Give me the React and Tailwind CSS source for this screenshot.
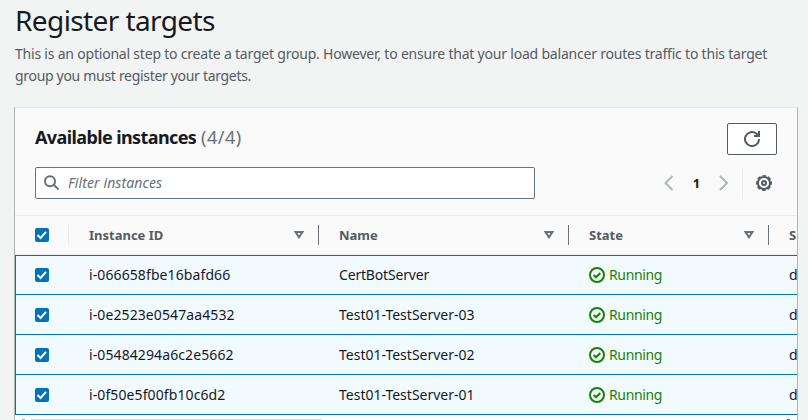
const instances = [
  { id: 'i-066658fbe16bafd66', name: 'CertBotServer' },
  { id: 'i-0e2523e0547aa4532', name: 'Test01-TestServer-03' },
  { id: 'i-05484294a6c2e5662', name: 'Test01-TestServer-02' },
  { id: 'i-0f50e5f00fb10c6d2', name: 'Test01-TestServer-01' },
];

function Checkbox() {
  return (
    <span className="flex h-[14px] w-[14px] shrink-0 rounded-[2px] bg-[#0073bb]">
      <svg width="14" height="14" viewBox="0 0 14 14" fill="none" stroke="#fff" strokeWidth="2">
        <path d="M2.5 7 L5.6 10 L11 3.8" />
      </svg>
    </span>
  );
}

function SortIcon() {
  return (
    <svg className="shrink-0" width="10" height="8" viewBox="0 0 10 8" fill="none" stroke="#687078" strokeWidth="2">
      <path d="M1.6 1 H8.4 L5 6.2 Z" />
    </svg>
  );
}

function StatusIcon() {
  return (
    <svg width="16" height="16" viewBox="0 0 16 16" fill="none" stroke="#1d8102" strokeWidth="2">
      <circle cx="8" cy="8" r="7" />
      <path d="M4.6 8 L7 10.3 L11.3 6" />
    </svg>
  );
}

function HeaderCell({ children }) {
  return (
    <div className="flex h-5 w-[250px] shrink-0 items-center border-r border-[#687078] pl-5 pr-[14px] [&:nth-child(4)]:w-[200px]">
      <span className="flex-1">{children}</span>
      <SortIcon />
    </div>
  );
}

function Row({ item, first }) {
  return (
    <div
      className={
        'flex h-10 items-center border-b border-l border-[#0073bb] bg-[#f1faff] pl-[19px] ' +
        (first ? 'border-t' : '')
      }
    >
      <Checkbox />
      <span className="ml-10 w-[250px] shrink-0 tracking-[0.1px]">{item.id}</span>
      <span className={'w-[250px] shrink-0 ' + (first ? 'tracking-[-0.18px]' : 'tracking-[0px]')}>{item.name}</span>
      <span className="flex w-[200px] shrink-0 items-center gap-1 text-[#1d8102]">
        <StatusIcon />
        <span className="tracking-[-0.35px]">Running</span>
      </span>
      <span className="shrink-0">d</span>
    </div>
  );
}

export default function App() {
  return (
    <div className="h-[420px] w-[808px] overflow-hidden bg-[#f2f3f3] font-['Noto_Sans',sans-serif] text-[14px] leading-[22px] text-[#16191f]">
      <header className="h-[107px] pl-[15px] pt-px">
        <h1 className="text-[28px] leading-[38px] tracking-[-0.6px]">Register targets</h1>
        <p className="mt-[4px] whitespace-nowrap text-[#545b64]">
          <span className="tracking-[-0.206px]">
            This is an optional step to create a target group. However, to ensure that your load balancer routes traffic to this target
          </span>
          <br />
          <span className="tracking-[-0.31px]">group you must register your targets.</span>
        </p>
      </header>

      <main className="ml-[14px] h-[313px] w-[784px] overflow-hidden border-x border-t border-x-[#aab7b8] border-t-[#e3e7e7] bg-white">
        <section className="h-[108px] border-b border-[#eaeded] bg-[#fafafa] pl-5 pr-5 pt-[15px]">
          <div className="flex items-start justify-between">
            <h2 className="mt-[2px] text-[18px] font-bold leading-[24px]">
              <span className="tracking-[-0.6px]">Available instances</span>{' '}
              <span className="font-normal tracking-[0.5px] text-[#687078]">(4/4)</span>
            </h2>
            <button className="flex h-8 w-[50px] items-center justify-center rounded-[2px] border border-[#545b64] bg-white">
              <svg width="16" height="16" viewBox="0 0 16 16" fill="none" stroke="#545b64" strokeWidth="2">
                <path d="M15 8 A7 7 0 1 1 12.5 2.7 L14.5 4.5" />
                <path d="M10 5 H15 V0" />
              </svg>
            </button>
          </div>
          <div className="mt-3 flex h-8 items-center">
            <div className="flex h-8 w-[500px] shrink-0 items-center rounded-[2px] border border-[#687078] bg-white pl-2">
              <svg width="16" height="16" viewBox="0 0 16 16" fill="none" stroke="#687078" strokeWidth="2">
                <circle cx="6" cy="6.3" r="5" />
                <path d="M9.8 9.8 L14.6 14.6" />
              </svg>
              <span className="ml-2 italic tracking-[0.1px] text-[#687078]">Filter instances</span>
            </div>
            <div className="ml-auto flex items-center">
              <svg width="10" height="16" viewBox="0 0 10 16" fill="none" stroke="#aab7b8" strokeWidth="2">
                <path d="M8.5 1 L1.5 8 L8.5 15" />
              </svg>
              <span className="w-[45px] text-center text-[13px] font-bold">1</span>
              <svg width="10" height="16" viewBox="0 0 10 16" fill="none" stroke="#aab7b8" strokeWidth="2">
                <path d="M1 1 L8 8 L1 15" />
              </svg>
              <span className="ml-[13px] h-8 w-px bg-[#eaeded]" />
              <svg className="ml-[13px] mr-[5px]" width="16" height="16" viewBox="0 0 16 16" fill="none" stroke="#545b64">
                <circle cx="8" cy="8" r="6.1" strokeWidth="2" />
                <circle cx="8" cy="8" r="7.2" strokeWidth="1.6" strokeDasharray="3.6 2.055" strokeDashoffset="1.8" />
                <circle cx="8" cy="8" r="2" strokeWidth="2" />
              </svg>
            </div>
          </div>
        </section>

        <section>
          <div className="flex h-[39px] items-center border-b border-[#eaeded] bg-[#fafafa] pl-5 text-[13px] font-bold text-[#545b64]">
            <div className="flex h-5 w-[34px] shrink-0 items-center border-r border-[#eaeded]">
              <Checkbox />
            </div>
            <HeaderCell>Instance ID</HeaderCell>
            <HeaderCell>Name</HeaderCell>
            <HeaderCell>State</HeaderCell>
            <span className="ml-5 shrink-0">S</span>
          </div>
          {instances.map((item, i) => (
            <Row key={item.id} item={item} first={i === 0} />
          ))}
          <div className="flex h-[5px] items-end bg-white pl-[7px] pr-[7px]">
            <span className="h-px w-[3px] bg-[#a3a3a3]" />
            <span className="ml-[6px] h-px w-[291px] bg-[#d0d7df]" />
            <span className="ml-auto h-px w-[3px] bg-[#606060]" />
          </div>
        </section>
      </main>
    </div>
  );
}
